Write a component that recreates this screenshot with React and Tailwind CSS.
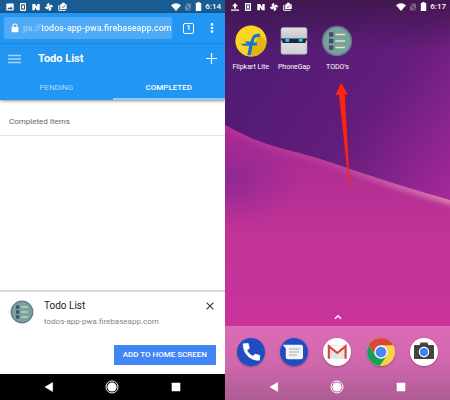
import React from "react";

function PictureIcon() {
  return (
    <svg viewBox="0 0 8 8" className="size-2">
      <rect x="0.3" y="0.5" width="7.4" height="7" rx="0.8" fill="#fff" />
      <path d="M1.2 6.2L2.7 4.2L3.7 5.3L5.1 3.5L6.9 6.2Z" fill="#31597f" />
    </svg>
  );
}

function UploadIcon() {
  return (
    <svg viewBox="0 0 8 8" className="size-2">
      <path d="M4 0L7 3.2H5V5.5H3V3.2H1ZM0 6.4H8V7.8H0Z" fill="#fff" />
    </svg>
  );
}

function NotificationIcons() {
  return (
    <>
      <svg viewBox="0 0 8 8" className="size-2">
        <rect x="1" y="0" width="6" height="8" rx="1" fill="#fff" />
        <rect x="2" y="1.4" width="4" height="5.2" fill="#3d5578" />
        <rect x="3" y="2.6" width="2" height="2.8" fill="#fff" />
      </svg>
      <svg viewBox="0 0 8 8" className="size-2">
        <path d="M0.3 1H3L5.2 4V1H7.7V7.2H5.1L2.9 4.2V7.2H0.3Z" fill="#fff" />
      </svg>
      <svg viewBox="0 0 8 8" className="size-2">
        <path
          d="M4 4V0.3A2 2 0 0 0 2.2 3.3ZM4 4H7.8A2 2 0 0 0 4.8 2.2ZM4 4V7.8A2 2 0 0 0 5.8 4.8ZM4 4H0.2A2 2 0 0 0 3.2 5.8Z"
          fill="#fff"
          stroke="#fff"
          strokeWidth="0.5"
        />
      </svg>
      <svg viewBox="0 0 9 9" className="size-[9px]">
        <path d="M2.2 2.2H3.6L4 0.8H6.6L7 2.2H8.7V7H2.2Z" fill="#fff" />
        <path d="M0.8 3V8.3H7.6" fill="none" stroke="#fff" strokeWidth="1" />
        <path d="M3.9 4.5L5.1 5.7L7.3 3.2" fill="none" stroke="#4f6480" strokeWidth="0.9" />
      </svg>
    </>
  );
}

function StatusBar({ first, time, className }) {
  return (
    <div className={"flex h-[13px] shrink-0 items-center justify-between pr-1 pl-1.5 " + className}>
      <div className="flex items-center gap-[5px]">
        {first}
        <NotificationIcons />
      </div>
      <div className="flex items-center gap-[3px]">
        <svg viewBox="0 0 10 8" className="h-2 w-2.5">
          <path d="M0 2.2Q5 -1.6 10 2.2L5 8Z" fill="#fff" />
        </svg>
        <svg viewBox="0 0 8 8" className="size-2 opacity-30">
          <path d="M3 0.5H7V7.5H1V2.5Z" fill="#fff" />
          <path d="M0.5 0.8L7.5 7.8" stroke="#222" strokeWidth="1" />
        </svg>
        <svg viewBox="0 0 7 9" className="h-[9px] w-[7px]">
          <path d="M2.3 0H4.7V1H6.2V9H0.8V1H2.3Z" fill="#fff" />
        </svg>
        <time className="text-[8px] leading-none font-medium text-white">{time}</time>
      </div>
    </div>
  );
}

function NavBar({ className }) {
  return (
    <nav className={"grid h-[26px] shrink-0 grid-cols-3 place-items-center px-[17px] " + className}>
      <button aria-label="Back">
        <svg viewBox="0 0 12 12" className="size-3">
          <path d="M2 6L9.6 1.6V10.4Z" fill="#fff" stroke="#fff" strokeWidth="0.6" strokeLinejoin="round" />
        </svg>
      </button>
      <button aria-label="Home">
        <svg viewBox="0 0 14 14" className="size-3.5">
          <circle cx="7" cy="7" r="6" fill="none" stroke="#fff" strokeWidth="1" />
          <circle cx="7" cy="7" r="4.6" fill="#fff" />
        </svg>
      </button>
      <button aria-label="Recent apps">
        <svg viewBox="0 0 12 12" className="size-3">
          <rect x="1.7" y="1.7" width="8.6" height="8.6" rx="0.6" fill="#fff" />
        </svg>
      </button>
    </nav>
  );
}

function TodoIcon({ className }) {
  return (
    <svg viewBox="0 0 32 32" className={className}>
      <circle cx="16" cy="16" r="14.4" fill="#77a39c" stroke="#68758f" strokeWidth="1.6" />
      <g fill="#454b6c">
        <rect x="8" y="7.2" width="4.4" height="4.4" />
        <rect x="8" y="13.8" width="4.4" height="4.4" />
        <rect x="8" y="20.4" width="4.4" height="4.4" />
      </g>
      <path d="M14.4 9.4H24M14.4 16H24M14.4 22.6H24" stroke="#e9e3c4" strokeWidth="1.5" />
    </svg>
  );
}

function FlipkartIcon() {
  return (
    <svg viewBox="0 0 32 32" className="size-8">
      <defs>
        <clipPath id="flipkart-disc">
          <circle cx="16" cy="16" r="15.6" />
        </clipPath>
      </defs>
      <g clipPath="url(#flipkart-disc)">
        <rect width="32" height="32" fill="#fbd51f" />
        <path d="M24 9L32 17V32H12L16 27Z" fill="#e3b414" />
        <path
          d="M25.3 9C20.2 8 17.3 10 16.2 14.5L15.7 16.6H9.5L12 18.8H5.5L8.5 20.8H14.2L12.3 30H15.8L17.8 20.4H21.6L22.3 17.4H18.6L19.2 15C19.8 12.4 21.4 11.7 24.4 12.2Z"
          fill="#1474d4"
        />
      </g>
    </svg>
  );
}

function PhoneGapIcon() {
  return (
    <svg viewBox="0 0 32 32" className="size-8">
      <defs>
        <linearGradient id="phonegap-face" x1="0" y1="0" x2="0" y2="1">
          <stop offset="0" stopColor="#e2e2e4" />
          <stop offset="0.4" stopColor="#c6c6ca" />
          <stop offset="0.6" stopColor="#dcdcdf" />
          <stop offset="1" stopColor="#d2d2d6" />
        </linearGradient>
      </defs>
      <rect x="3" y="2.6" width="26" height="26.6" rx="2" fill="url(#phonegap-face)" stroke="#a5a3aa" strokeWidth="0.6" />
      <path d="M3 13.4H29V15.6H27.6V18H4.4V15.6H3Z" fill="#17283c" />
      <rect x="7.4" y="14" width="3.8" height="2.8" fill="#28c8ee" />
      <rect x="20.8" y="14" width="3.8" height="2.8" fill="#28c8ee" />
    </svg>
  );
}

function PhoneIcon() {
  return (
    <svg viewBox="0 0 28 28" className="size-7">
      <circle cx="14" cy="14" r="14" fill="#1f4dc0" />
      <path
        d="M6.2 5.8L11.2 5.5L12.4 10.3L9.8 12.2C11.2 15 13.2 17 16 18.3L18.2 16.1L22.8 17.5L22.4 22.3C12.8 22.6 6 15.3 6.2 5.8Z"
        fill="#fff"
        stroke="#fff"
        strokeWidth="0.7"
        strokeLinejoin="round"
      />
    </svg>
  );
}

function MessagesIcon() {
  return (
    <svg viewBox="0 0 28 28" className="size-7">
      <circle cx="14" cy="14" r="14" fill="#1f4dc0" />
      <path d="M2.8 6.8H21A2 2 0 0 1 23 8.8V19.3A2 2 0 0 1 21 21.3H7.8A2 2 0 0 1 5.8 19.3V10.4Z" fill="#f4f5f7" />
      <path d="M9 11H19.6M9 14H19.6M9 17H17" stroke="#a4a9b3" strokeWidth="1.2" />
    </svg>
  );
}

function GmailIcon() {
  return (
    <svg viewBox="0 0 28 28" className="size-7">
      <circle cx="14" cy="14" r="14" fill="#fff" />
      <rect x="5" y="7.2" width="18.4" height="13.6" fill="#e4e4e4" />
      <path d="M7 8L14.2 14.4L21.4 8Z" fill="#fafafa" />
      <path d="M5.8 20.8V8.2L14.2 15L22.6 8.2V20.8" fill="none" stroke="#dc4034" strokeWidth="2.1" />
    </svg>
  );
}

function ChromeIcon() {
  return (
    <svg viewBox="0 0 28 28" className="size-7">
      <circle cx="14" cy="14" r="14" fill="#fdd047" />
      <path d="M14 14L8.2 17.4L1.9 7A14 14 0 0 0 12.6 27.9L19.9 17.4Z" fill="#15a05c" />
      <path d="M1.9 7A14 14 0 0 1 26.2 7.2H14V14L8.2 17.4Z" fill="#db4437" />
      <circle cx="14" cy="14" r="6.8" fill="#f5f5f5" />
      <circle cx="14" cy="14" r="5.3" fill="#4688f4" />
    </svg>
  );
}

function CameraIcon() {
  return (
    <svg viewBox="0 0 28 28" className="size-7">
      <circle cx="14" cy="14" r="14" fill="#fff" />
      <path d="M5 7H9.6L10.6 4.6H17.4L18.4 7H23A1 1 0 0 1 24 8V21H4V8A1 1 0 0 1 5 7Z" fill="#454545" />
      <circle cx="14" cy="14" r="6.4" fill="#303030" />
      <circle cx="14" cy="14" r="5.4" fill="#fff" />
      <circle cx="14" cy="14" r="4" fill="#3f80f2" />
    </svg>
  );
}

function BrowserBar() {
  return (
    <div className="flex h-[31px] shrink-0 items-center border-b border-[#1d8ae2] pl-1">
      <label className="flex h-[22px] min-w-0 flex-1 items-center gap-1 rounded-[2px] bg-[#4fabf5] pl-[7px]">
        <svg viewBox="0 0 8 10" className="h-2.5 w-2 shrink-0" aria-label="Address">
          <path d="M2 4.5V3A2 2 0 0 1 6 3V4.5" fill="none" stroke="#fff" strokeWidth="1.1" />
          <rect x="0.6" y="4" width="6.8" height="5.2" rx="0.6" fill="#fff" />
        </svg>
        <input
          type="text"
          readOnly
          defaultValue="ps://todos-app-pwa.firebaseapp.com"
          className="min-w-0 flex-1 bg-linear-to-r from-[#a5d3fa] from-[19px] to-white to-[19px] bg-clip-text text-[9px] leading-4 font-medium text-transparent outline-none"
        />
      </label>
      <button aria-label="Open tabs" className="ml-[11px] flex size-[11px] items-center justify-center rounded-[2px] border border-white text-[7px] leading-none font-bold text-white">
        1
      </button>
      <button aria-label="More options" className="mr-[11px] ml-4">
        <svg viewBox="0 0 4 12" className="h-3 w-1">
          <circle cx="2" cy="2.4" r="1.3" fill="#fff" />
          <circle cx="2" cy="6" r="1.3" fill="#fff" />
          <circle cx="2" cy="9.6" r="1.3" fill="#fff" />
        </svg>
      </button>
    </div>
  );
}

function BrowserPhone() {
  return (
    <section className="flex min-h-screen flex-col bg-white">
      <StatusBar first={<PictureIcon />} time="6:14" className="bg-[#195c93]" />
      <header className="relative bg-[#2196f3] shadow-[0_1px_3px_rgba(0,0,0,0.45)]">
        <BrowserBar />
        <div className="flex h-[30px] items-center border-b border-[#2b9af2] px-2">
          <button aria-label="Menu">
            <svg viewBox="0 0 13 10" className="h-2.5 w-[13px]">
              <path d="M0 1.5H13M0 5H13M0 8.5H13" stroke="#a6d5fa" strokeWidth="1.3" />
            </svg>
          </button>
          <h1 className="ml-[17px] flex-1 text-[11px] leading-4 font-bold text-white">Todo List</h1>
          <button aria-label="Add item">
            <svg viewBox="0 0 11 11" className="size-[11px]">
              <path d="M5.5 0V11M0 5.5H11" stroke="#fff" strokeWidth="1.2" />
            </svg>
          </button>
        </div>
        <div role="tablist" className="grid h-[26px] grid-cols-2 text-[8px]">
          <button role="tab" aria-selected="false" className="border-b-2 border-transparent pt-[3px] text-[#b3dafa]">
            PENDING
          </button>
          <button role="tab" aria-selected="true" className="border-b-2 border-[#90caf9] pt-[3px] font-medium text-white">
            COMPLETED
          </button>
        </div>
      </header>
      <main className="flex-1">
        <h2 className="border-b border-[#e3e3e3] px-[9px] pt-[17px] pb-2 text-[8px] leading-[10px] text-[#666]">
          Completed Items
        </h2>
      </main>
      <aside className="flex h-[84px] flex-col border-t-2 border-[#d9d9d9] bg-white pr-[9px] pl-2.5">
        <div className="flex pt-2">
          <TodoIcon className="size-6" />
          <div className="ml-2.5 flex-1">
            <h3 className="text-[10px] leading-3 text-[#222]">Todo List</h3>
            <p className="mt-1 text-[8px] leading-3 text-[#858585]">todos-app-pwa.firebaseapp.com</p>
          </div>
          <button aria-label="Dismiss" className="mt-0.5 mr-0.5 self-start">
            <svg viewBox="0 0 8 8" className="size-2">
              <path d="M0.6 0.6L7.4 7.4M7.4 0.6L0.6 7.4" stroke="#333" strokeWidth="1.1" />
            </svg>
          </button>
        </div>
        <button className="mt-auto mb-[9px] h-5 self-end bg-[#4285f4] px-[9px] text-[8px] font-medium text-white">
          ADD TO HOME SCREEN
        </button>
      </aside>
      <NavBar className="bg-black" />
    </section>
  );
}

function Wallpaper() {
  return (
    <svg viewBox="0 0 225 400" preserveAspectRatio="none" className="absolute inset-0 h-full w-full">
      <defs>
        <linearGradient id="sky" gradientUnits="userSpaceOnUse" x1="20" y1="60" x2="225" y2="215">
          <stop offset="0" stopColor="#4f1b73" />
          <stop offset="0.5" stopColor="#631d7a" />
          <stop offset="1" stopColor="#aa2a9b" />
        </linearGradient>
        <linearGradient id="sky-top" x1="0" y1="0" x2="0" y2="1">
          <stop offset="0" stopColor="#3c1646" stopOpacity="0.8" />
          <stop offset="1" stopColor="#3c1646" stopOpacity="0" />
        </linearGradient>
        <linearGradient id="hill" gradientUnits="userSpaceOnUse" x1="0" y1="140" x2="0" y2="330">
          <stop offset="0" stopColor="#a92b91" />
          <stop offset="0.5" stopColor="#c03397" />
          <stop offset="1" stopColor="#c9349c" />
        </linearGradient>
        <radialGradient id="hill-shade">
          <stop offset="0" stopColor="#7f2496" stopOpacity="0.75" />
          <stop offset="1" stopColor="#8f2694" stopOpacity="0" />
        </radialGradient>
        <linearGradient id="ridge" gradientUnits="userSpaceOnUse" x1="0" y1="0" x2="225" y2="0">
          <stop offset="0" stopColor="#b52f98" />
          <stop offset="0.5" stopColor="#b94097" />
          <stop offset="1" stopColor="#dc7eb0" />
        </linearGradient>
        <filter id="soften" x="-10%" y="-20%" width="120%" height="140%">
          <feGaussianBlur stdDeviation="2.5" />
        </filter>
        <clipPath id="hill-clip">
          <path d="M0 125Q28 141 55 148Q95 158 122 168Q175 186 225 200V400H0Z" />
        </clipPath>
      </defs>
      <rect width="225" height="400" fill="url(#sky)" />
      <rect width="225" height="50" fill="url(#sky-top)" />
      <g clipPath="url(#hill-clip)">
        <rect width="225" height="400" fill="url(#hill)" />
        <ellipse cx="0" cy="178" rx="80" ry="48" fill="url(#hill-shade)" />
        <path
          d="M-10 121Q28 141 55 148Q95 158 122 168Q175 186 235 203"
          fill="none"
          stroke="url(#ridge)"
          strokeWidth="9"
          filter="url(#soften)"
        />
      </g>
    </svg>
  );
}

const apps = [
  { name: "Flipkart Lite", icon: <FlipkartIcon /> },
  { name: "PhoneGap", icon: <PhoneGapIcon /> },
  { name: "TODO's", icon: <TodoIcon className="size-8" /> },
];

const dock = [
  { name: "Phone", icon: <PhoneIcon /> },
  { name: "Messages", icon: <MessagesIcon /> },
  { name: "Gmail", icon: <GmailIcon /> },
  { name: "Chrome", icon: <ChromeIcon /> },
  { name: "Camera", icon: <CameraIcon /> },
];

function HomePhone() {
  return (
    <section className="relative isolate min-h-screen overflow-hidden">
      <Wallpaper />
      <div className="relative flex min-h-screen flex-col">
        <StatusBar first={<UploadIcon />} time="6:17" className="" />
        <div className="grid grid-cols-5 px-1 pt-3">
          {apps.map((app) => (
            <button key={app.name} className="flex flex-col items-center gap-[5px]">
              {app.icon}
              <span className="text-[7px] leading-[10px] whitespace-nowrap text-white">{app.name}</span>
            </button>
          ))}
        </div>
        <div className="flex flex-1 items-end justify-center pb-1.5">
          <button aria-label="All apps">
            <svg viewBox="0 0 8 6" className="h-1.5 w-2">
              <path d="M1 4.8L4 1.8L7 4.8" fill="none" stroke="#fff" strokeWidth="1.4" />
            </svg>
          </button>
        </div>
        <div className="bg-linear-to-b from-[#dc6bb6] via-[#d068ae] to-[#ad5c93]">
          <div className="grid h-12 grid-cols-5 place-items-center px-1 pt-1">
            {dock.map((app) => (
              <button key={app.name} aria-label={app.name} className="rounded-full shadow-[0_1px_2px_rgba(0,0,0,0.3)]">
                {app.icon}
              </button>
            ))}
          </div>
          <NavBar className="" />
        </div>
      </div>
      <svg viewBox="0 0 20 106" className="absolute top-[82px] left-[108px] h-[106px] w-5">
        <path d="M8.2 1L2.4 13.5L6 12.5L16.2 106.4L16.9 106.4L11.8 12.2L15.2 12.8Z" fill="#fb260d" />
      </svg>
    </section>
  );
}

export default function App() {
  return (
    <div className="grid min-h-screen grid-cols-2 font-[Roboto,'Liberation_Sans',sans-serif] [&_svg]:block">
      <BrowserPhone />
      <HomePhone />
    </div>
  );
}
